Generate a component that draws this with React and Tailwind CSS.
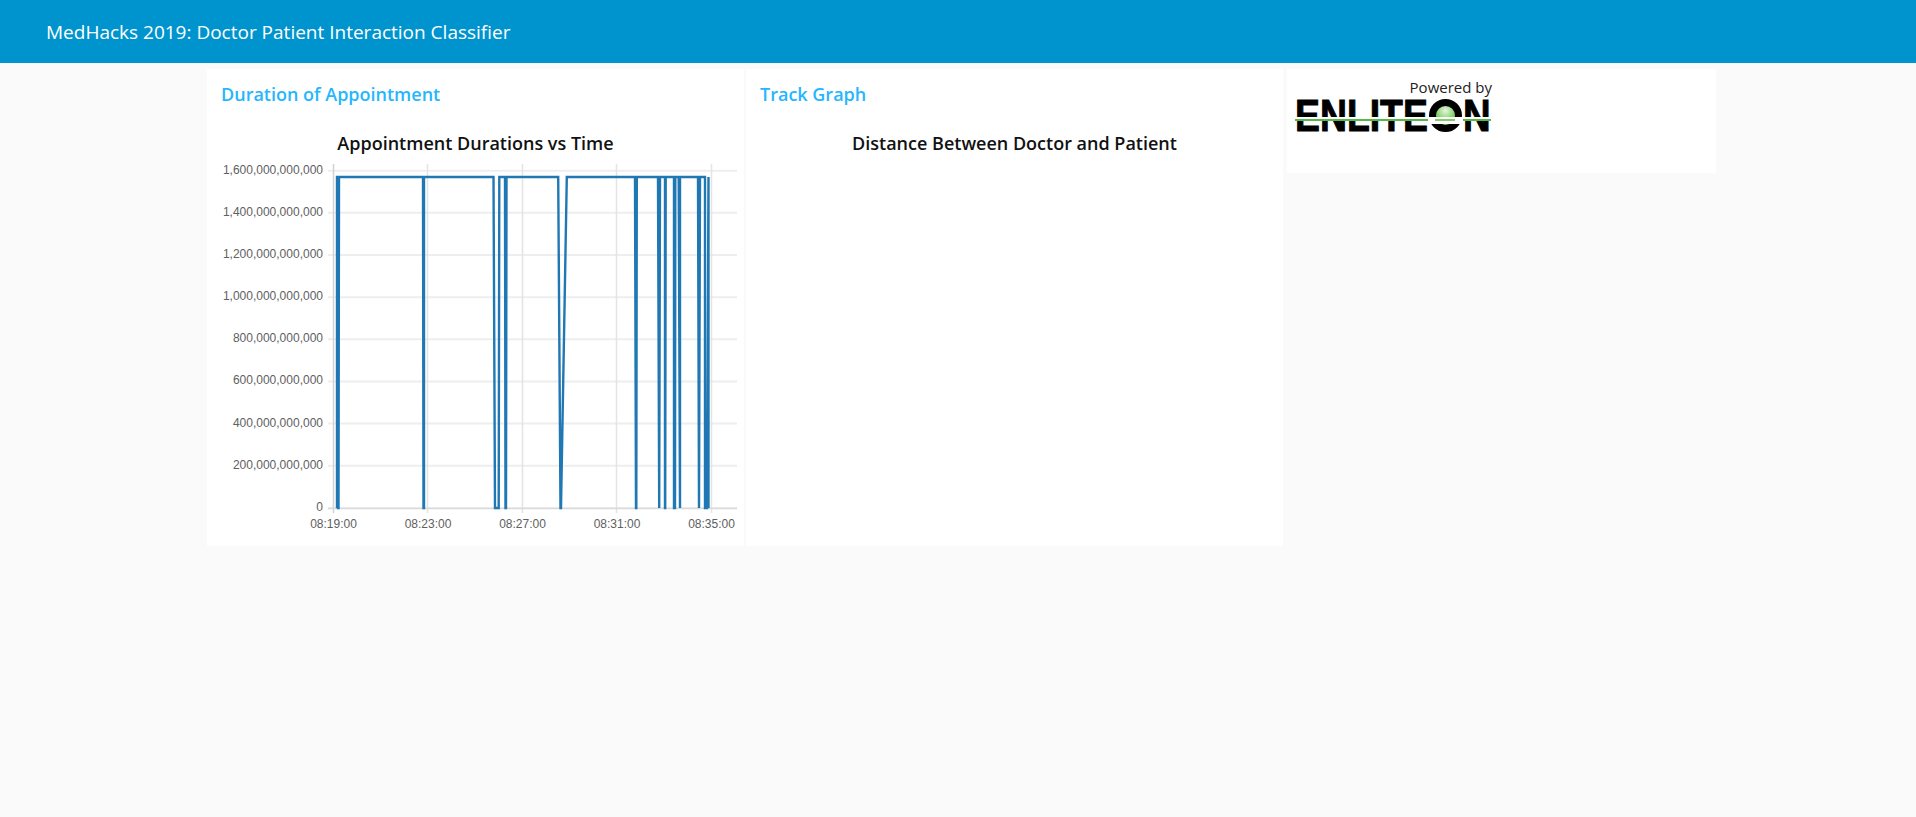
import React from 'react';

const yLabels = ['1,600,000,000,000', '1,400,000,000,000', '1,200,000,000,000', '1,000,000,000,000', '800,000,000,000', '600,000,000,000', '400,000,000,000', '200,000,000,000', '0'];
const xLabels = ['08:19:00', '08:23:00', '08:27:00', '08:31:00', '08:35:00'];

const T = 177;
const B = 508;

// each drop: x at top going down, x at bottom, x at bottom, x at top going back up
const drops = [
  [423, 423.5, 424, 424],
  [493.5, 495, 498.7, 499.3],
  [505, 505.5, 506, 506.5],
  [558.2, 560.5, 561, 566.8],
  [635, 636, 636.3, 636.8],
  [658, 659.2, 659.2, 660],
  [665, 665, 665.2, 665.7],
  [674, 674, 675, 675.3],
  [678.7, 680, 680, 680],
  [698, 699, 699, 700],
];

const linePath = () => {
  let d = `M 337 ${B} L 337 ${T} L 338.5 ${T} L 338 ${B} L 338.5 ${B} L 339 ${T}`;
  drops.forEach(([a, b, c, e]) => {
    d += ` L ${a} ${T} L ${b} ${B} L ${c} ${B} L ${e} ${T}`;
  });
  d += ` L 705 ${T} L 705 ${B} L 707 ${B} L 708.5 ${T} L 708.5 ${B}`;
  return d;
};

const Chart = () => (
  <svg width="537" height="386" viewBox="207 160 537 386" className="block">
    {yLabels.map((l, i) => (
      <line key={l} x1="328" x2="737" y1={170.7 + i * 42.15} y2={170.7 + i * 42.15} stroke="#eeeeee" strokeWidth="2" />
    ))}
    {[427.5, 522.5, 616.5, 711.5].map((x) => (
      <line key={x} x1={x} x2={x} y1="164" y2="513" stroke="#e4e4e4" strokeWidth="1.5" />
    ))}
    <line x1="333.5" x2="333.5" y1="164" y2="513" stroke="#d2d2d2" strokeWidth="1.5" />
    <line x1="328" x2="737" y1="508.5" y2="508.5" stroke="#dadada" strokeWidth="1.5" />
    <path d={linePath()} fill="none" stroke="#1f77b4" strokeWidth="2.4" />
    <g fill="#606060" fontSize="12" fontFamily="'Liberation Sans', Arial, sans-serif">
      {yLabels.map((l, i) => (
        <text key={l} x="323" y={173.7 + i * 42.15} textAnchor="end">{l}</text>
      ))}
      {xLabels.map((l, i) => (
        <text key={l} x={333.5 + i * 94.5} y="528.3" textAnchor="middle">{l}</text>
      ))}
    </g>
  </svg>
);

const Card = ({ title, heading, children }) => (
  <div className="w-[537px] h-[477px] bg-white">
    <h2 className="pl-[14px] pt-[13px] h-[44px] text-[18px] leading-[24px] font-semibold text-[#25b6fd]">{title}</h2>
    <div className="pt-[18px] pb-[5px] text-center text-[18px] leading-[24px] font-semibold text-[#111]">{heading}</div>
    {children}
  </div>
);

const Logo = () => (
  <div className="relative flex w-[196px] h-[33px] mt-[2px] text-[45px] leading-[33px] font-bold text-black font-['Liberation_Sans',sans-serif] [-webkit-text-stroke:1px_black]">
    <span className="block w-[134px] scale-x-[0.83] origin-left whitespace-nowrap">ENLITE</span>
    <span className="relative block w-[34px] text-transparent [-webkit-text-stroke:0]">
      O
      <span className="absolute left-0 top-0 w-[33px] h-[33px] rounded-full border-[7px] border-black bg-[radial-gradient(circle_at_50%_25%,#e8f5e0,#7fd066_55%,#5cb848)]" />
    </span>
    <span className="block w-[28px] scale-x-[0.85] origin-left whitespace-nowrap">N</span>
    <div className="absolute left-0 right-0 top-[18px] h-[2px] bg-white" />
    <div className="absolute left-0 right-0 top-[20px] h-[2px] bg-[#55b848]" />
    <div className="absolute left-[133px] top-[20px] w-[35px] h-[5px] bg-white" />
    <div className="absolute left-[140px] top-[20px] w-[20px] h-[2px] bg-[#7fd066]" />
  </div>
);

export default function App() {
  return (
    <div className="min-h-screen bg-[#fafafa] font-['Open_Sans','Noto_Sans',sans-serif]">
      <header className="h-[63px] bg-[#0094ce] flex items-center pl-[46px] pt-[2px] text-white text-[19px]">
        MedHacks 2019: Doctor Patient Interaction Classifier
      </header>
      <main className="flex gap-[2px] pt-[6px] pl-[207px]">
        <Card title="Duration of Appointment" heading="Appointment Durations vs Time">
          <Chart />
        </Card>
        <Card title="Track Graph" heading="Distance Between Doctor and Patient" />
        <div className="ml-[2px] w-[429px] h-[104px] bg-white pl-[8px] pt-[8px]">
          <div className="w-[197px] text-right text-[15px] leading-[20px] text-[#222]">Powered by</div>
          <Logo />
        </div>
      </main>
    </div>
  );
}
